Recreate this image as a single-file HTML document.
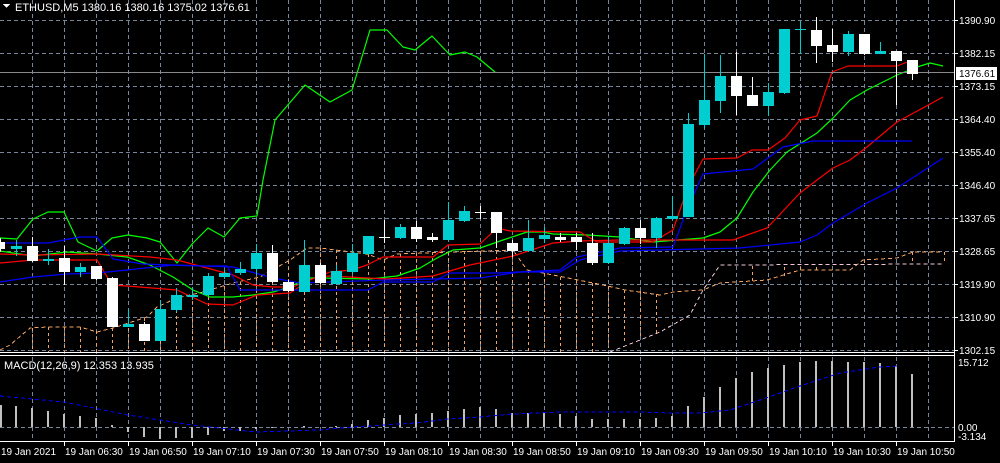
<!DOCTYPE html>
<html><head><meta charset="utf-8"><style>
html,body{margin:0;padding:0;background:#000;width:1000px;height:463px;overflow:hidden}
svg{display:block}
text{font-family:"Liberation Sans",sans-serif;font-size:10px;fill:#fff}
</style></head><body>
<svg width="1000" height="463" viewBox="0 0 1000 463" xmlns="http://www.w3.org/2000/svg" shape-rendering="crispEdges">
<rect width="1000" height="463" fill="#000"/>
<g stroke="#77869a" stroke-width="1" stroke-dasharray="4,3" fill="none">
<path d="M32.5 0V441M64.5 0V441M96.5 0V441M128.5 0V441M160.5 0V441M192.5 0V441M224.5 0V441M256.5 0V441M288.5 0V441M320.5 0V441M352.5 0V441M384.5 0V441M416.5 0V441M448.5 0V441M480.5 0V441M512.5 0V441M544.5 0V441M576.5 0V441M608.5 0V441M640.5 0V441M672.5 0V441M704.5 0V441M736.5 0V441M768.5 0V441M800.5 0V441M832.5 0V441M864.5 0V441M896.5 0V441M928.5 0V441"/>
<path d="M0 20.5H954M0 53.5H954M0 86.5H954M0 119.5H954M0 152.5H954M0 185.5H954M0 218.5H954M0 251.5H954M0 284.5H954M0 317.5H954M0 350.5H954M0 427.5H954"/>
</g>
<rect x="0" y="354" width="954" height="1" fill="#000"/>
<g stroke="#f4a460" stroke-dasharray="3,3" stroke-width="1">
<path d="M32.5 328V352M48.5 327V352M64.5 327V352M80.5 327V352M96.5 331V352M112.5 328V352M128.5 322V352M144.5 318V352M160.5 305V352M176.5 298V352M192.5 295V352M208.5 291V352M224.5 286V352M240.5 282V352M256.5 278V352M272.5 270V352M288.5 261V352M304.5 250V352M320.5 248V352M336.5 250V352M352.5 252V352M368.5 254V352M384.5 260V352M400.5 254V352M416.5 253V352M432.5 252V352M448.5 252V352M464.5 251V352M480.5 251V352M496.5 251V352M512.5 250V352M528.5 270V352M544.5 273V352M560.5 277V352M576.5 280V352M592.5 283V352M608.5 286V348M624.5 290V342M640.5 291V337M656.5 294V333"/>
<path d="M752.5 281V264M784.5 276V264M800.5 270V264M816.5 270V264M864.5 260V264M912.5 252V264M944.5 252V264"/>
</g>
<g fill="none" stroke-width="1" stroke-linejoin="round">
<polyline stroke="#f4a460" stroke-dasharray="4,3" points="0,350 10,345 30,328 48,327 80,327 97,332 113,328 147,317 157,307 177,298 203,292 233,283 260,277 290,260 307,248 320,248 367,254 383,260 397,254 513,250 527,270 553,275 603,285 625,290 660,295 673,292 703,290 720,283 767,280 800,270 850,270 863,260 897,258 913,252 943,252"/>
<polyline stroke="#f0c8d8" stroke-dasharray="4,3" points="610,352 660,332 690,315 703,290 720,265 943,264"/>
</g>
<g fill="none" stroke-width="1.2" stroke-linejoin="round" shape-rendering="auto">
<polyline stroke="#00ff00" points="0,238 17,239 33,219 48,212 64,212 78,242 97,251 112,238 128,235 147,238 160,242 177,263 193,243 208,228 224,237 240,218 257,216 263,180 275,120 305,85 330,102 352,90 370,30 387,30 403,47 415,50 432,36 450,55 465,52 477,57 495,72"/>
<polyline stroke="#00ff00" points="0,251 33,256 67,252 97,254 127,257 150,265 173,277 193,290 210,297 233,297 253,295 273,292 290,287 307,278 320,278 370,279 397,276 420,268 437,258 453,250 480,248 503,240 527,232 543,232 553,234 587,235 620,237 653,242 703,238 720,232 737,218 753,192 770,170 787,152 817,133 833,118 850,100 867,90 897,75 917,67 930,63 943,66"/>
<polyline stroke="#ff0000" points="0,263 33,260 97,260 112,285 127,286 177,290 207,304 233,305 257,295 290,293 310,280 330,272 352,270 367,265 383,257 433,257 448,245 480,244 497,228 510,231 580,232 597,242 653,242 673,230 688,187 703,159 737,158 752,150 768,150 785,138 800,120 817,116 832,72 848,66 897,66 910,61"/>
<polyline stroke="#ff0000" points="0,254 33,255 97,254 150,257 177,260 207,268 233,275 253,285 273,287 293,287 317,277 330,276 387,279 433,276 470,265 513,256 553,243 580,241 620,240 653,240 733,240 767,228 800,193 817,180 833,168 850,160 867,147 897,122 943,97"/>
<polyline stroke="#0000ff" points="0,243 48,243 80,237 97,237 113,259 143,264 200,266 227,266 240,290 368,290 383,282 433,282 450,273 497,273 560,270 577,257 620,248 673,247 688,207 703,174 753,169 783,147 813,141 912,141"/>
<polyline stroke="#0000ff" points="0,282 33,277 67,274 97,273 127,270 173,265 233,267 273,278 300,283 387,280 480,278 520,272 560,272 580,260 620,251 740,248 800,242 817,235 833,223 867,203 897,188 943,158"/>
</g>
<rect x="0" y="72" width="954" height="1" fill="#8a8a8a"/>
<g>
<rect x="0" y="238" width="1" height="14" fill="#fff"/><rect x="0" y="242" width="5" height="7" fill="#fff"/>
<rect x="16" y="240" width="1" height="16" fill="#00ced1"/><rect x="11" y="246" width="11" height="3" fill="#00ced1"/>
<rect x="32" y="237" width="1" height="25" fill="#fff"/><rect x="27" y="246" width="11" height="15" fill="#fff"/>
<rect x="48" y="249" width="1" height="16" fill="#00ced1"/><rect x="43" y="259" width="11" height="2" fill="#00ced1"/>
<rect x="64" y="246" width="1" height="39" fill="#fff"/><rect x="59" y="258" width="11" height="14" fill="#fff"/>
<rect x="80" y="263" width="1" height="14" fill="#00ced1"/><rect x="75" y="267" width="11" height="5" fill="#00ced1"/>
<rect x="96" y="266" width="1" height="14" fill="#fff"/><rect x="91" y="266" width="11" height="13" fill="#fff"/>
<rect x="112" y="277" width="1" height="50" fill="#fff"/><rect x="107" y="278" width="11" height="49" fill="#fff"/>
<rect x="128" y="309" width="1" height="18" fill="#00ced1"/><rect x="123" y="324" width="11" height="3" fill="#00ced1"/>
<rect x="144" y="322" width="1" height="19" fill="#fff"/><rect x="139" y="324" width="11" height="17" fill="#fff"/>
<rect x="160" y="300" width="1" height="41" fill="#00ced1"/><rect x="155" y="309" width="11" height="32" fill="#00ced1"/>
<rect x="176" y="288" width="1" height="24" fill="#00ced1"/><rect x="171" y="295" width="11" height="15" fill="#00ced1"/>
<rect x="192" y="287" width="1" height="13" fill="#00ced1"/><rect x="187" y="295" width="11" height="2" fill="#00ced1"/>
<rect x="208" y="273" width="1" height="23" fill="#00ced1"/><rect x="203" y="276" width="11" height="19" fill="#00ced1"/>
<rect x="224" y="270" width="1" height="9" fill="#00ced1"/><rect x="219" y="273" width="11" height="4" fill="#00ced1"/>
<rect x="240" y="262" width="1" height="13" fill="#00ced1"/><rect x="235" y="269" width="11" height="4" fill="#00ced1"/>
<rect x="256" y="244" width="1" height="31" fill="#00ced1"/><rect x="251" y="253" width="11" height="16" fill="#00ced1"/>
<rect x="272" y="245" width="1" height="38" fill="#fff"/><rect x="267" y="253" width="11" height="29" fill="#fff"/>
<rect x="288" y="280" width="1" height="12" fill="#fff"/><rect x="283" y="282" width="11" height="9" fill="#fff"/>
<rect x="304" y="240" width="1" height="52" fill="#00ced1"/><rect x="299" y="265" width="11" height="27" fill="#00ced1"/>
<rect x="320" y="263" width="1" height="21" fill="#fff"/><rect x="315" y="265" width="11" height="18" fill="#fff"/>
<rect x="336" y="265" width="1" height="20" fill="#00ced1"/><rect x="331" y="271" width="11" height="13" fill="#00ced1"/>
<rect x="352" y="244" width="1" height="30" fill="#00ced1"/><rect x="347" y="253" width="11" height="19" fill="#00ced1"/>
<rect x="368" y="236" width="1" height="19" fill="#00ced1"/><rect x="363" y="236" width="11" height="18" fill="#00ced1"/>
<rect x="384" y="220" width="1" height="23" fill="#fff"/><rect x="379" y="237" width="11" height="1" fill="#fff"/>
<rect x="400" y="224" width="1" height="15" fill="#00ced1"/><rect x="395" y="227" width="11" height="11" fill="#00ced1"/>
<rect x="416" y="221" width="1" height="21" fill="#fff"/><rect x="411" y="227" width="11" height="12" fill="#fff"/>
<rect x="432" y="233" width="1" height="9" fill="#fff"/><rect x="427" y="237" width="11" height="3" fill="#fff"/>
<rect x="448" y="202" width="1" height="39" fill="#00ced1"/><rect x="443" y="220" width="11" height="20" fill="#00ced1"/>
<rect x="464" y="206" width="1" height="16" fill="#00ced1"/><rect x="459" y="211" width="11" height="10" fill="#00ced1"/>
<rect x="480" y="206" width="1" height="13" fill="#fff"/><rect x="475" y="212" width="11" height="1" fill="#fff"/>
<rect x="496" y="212" width="1" height="36" fill="#fff"/><rect x="491" y="212" width="11" height="21" fill="#fff"/>
<rect x="512" y="240" width="1" height="17" fill="#fff"/><rect x="507" y="243" width="11" height="8" fill="#fff"/>
<rect x="528" y="220" width="1" height="32" fill="#00ced1"/><rect x="523" y="238" width="11" height="13" fill="#00ced1"/>
<rect x="544" y="227" width="1" height="16" fill="#00ced1"/><rect x="539" y="235" width="11" height="4" fill="#00ced1"/>
<rect x="560" y="233" width="1" height="9" fill="#fff"/><rect x="555" y="237" width="11" height="3" fill="#fff"/>
<rect x="576" y="233" width="1" height="17" fill="#fff"/><rect x="571" y="237" width="11" height="5" fill="#fff"/>
<rect x="592" y="233" width="1" height="32" fill="#fff"/><rect x="587" y="243" width="11" height="20" fill="#fff"/>
<rect x="608" y="236" width="1" height="28" fill="#00ced1"/><rect x="603" y="243" width="11" height="20" fill="#00ced1"/>
<rect x="624" y="227" width="1" height="18" fill="#00ced1"/><rect x="619" y="228" width="11" height="16" fill="#00ced1"/>
<rect x="640" y="220" width="1" height="24" fill="#fff"/><rect x="635" y="228" width="11" height="10" fill="#fff"/>
<rect x="656" y="217" width="1" height="31" fill="#00ced1"/><rect x="651" y="218" width="11" height="20" fill="#00ced1"/>
<rect x="672" y="196" width="1" height="24" fill="#00ced1"/><rect x="667" y="216" width="11" height="3" fill="#00ced1"/>
<rect x="688" y="113" width="1" height="104" fill="#00ced1"/><rect x="683" y="124" width="11" height="93" fill="#00ced1"/>
<rect x="704" y="54" width="1" height="74" fill="#00ced1"/><rect x="699" y="100" width="11" height="25" fill="#00ced1"/>
<rect x="720" y="55" width="1" height="58" fill="#00ced1"/><rect x="715" y="76" width="11" height="25" fill="#00ced1"/>
<rect x="736" y="52" width="1" height="63" fill="#fff"/><rect x="731" y="76" width="11" height="20" fill="#fff"/>
<rect x="752" y="77" width="1" height="29" fill="#fff"/><rect x="747" y="95" width="11" height="11" fill="#fff"/>
<rect x="768" y="83" width="1" height="33" fill="#00ced1"/><rect x="763" y="92" width="11" height="14" fill="#00ced1"/>
<rect x="784" y="29" width="1" height="65" fill="#00ced1"/><rect x="779" y="29" width="11" height="64" fill="#00ced1"/>
<rect x="800" y="21" width="1" height="33" fill="#00ced1"/><rect x="795" y="29" width="11" height="1" fill="#00ced1"/>
<rect x="816" y="17" width="1" height="46" fill="#fff"/><rect x="811" y="30" width="11" height="16" fill="#fff"/>
<rect x="832" y="29" width="1" height="33" fill="#fff"/><rect x="827" y="45" width="11" height="7" fill="#fff"/>
<rect x="848" y="31" width="1" height="25" fill="#00ced1"/><rect x="843" y="34" width="11" height="18" fill="#00ced1"/>
<rect x="864" y="34" width="1" height="21" fill="#fff"/><rect x="859" y="34" width="11" height="20" fill="#fff"/>
<rect x="880" y="42" width="1" height="12" fill="#00ced1"/><rect x="875" y="51" width="11" height="3" fill="#00ced1"/>
<rect x="896" y="51" width="1" height="54" fill="#fff"/><rect x="891" y="51" width="11" height="10" fill="#fff"/>
<rect x="912" y="60" width="1" height="20" fill="#fff"/><rect x="907" y="60" width="11" height="14" fill="#fff"/>
</g>
<g fill="#c0c0c0">
<rect x="0" y="405" width="2" height="22"/><rect x="15" y="406" width="2" height="21"/><rect x="31" y="408" width="2" height="19"/><rect x="47" y="411" width="2" height="16"/><rect x="63" y="414" width="2" height="13"/><rect x="79" y="416" width="2" height="11"/><rect x="95" y="418" width="2" height="9"/><rect x="111" y="425" width="2" height="2"/>
<rect x="127" y="427" width="2" height="5"/><rect x="143" y="427" width="2" height="10"/><rect x="159" y="427" width="2" height="12"/><rect x="175" y="427" width="2" height="11"/><rect x="191" y="427" width="2" height="11"/><rect x="207" y="427" width="2" height="8"/><rect x="223" y="427" width="2" height="4"/><rect x="239" y="427" width="2" height="4"/><rect x="255" y="427" width="2" height="2"/><rect x="271" y="427" width="2" height="1"/>
<rect x="303" y="426" width="2" height="1"/><rect x="335" y="426" width="2" height="1"/><rect x="351" y="424" width="2" height="3"/><rect x="367" y="420" width="2" height="7"/><rect x="383" y="418" width="2" height="9"/><rect x="399" y="415" width="2" height="12"/><rect x="415" y="414" width="2" height="13"/><rect x="431" y="413" width="2" height="14"/><rect x="447" y="411" width="2" height="16"/><rect x="463" y="409" width="2" height="18"/><rect x="479" y="407" width="2" height="20"/><rect x="495" y="409" width="2" height="18"/><rect x="511" y="413" width="2" height="14"/><rect x="527" y="413" width="2" height="14"/><rect x="543" y="413" width="2" height="14"/><rect x="559" y="414" width="2" height="13"/><rect x="575" y="416" width="2" height="11"/><rect x="591" y="419" width="2" height="8"/><rect x="607" y="419" width="2" height="8"/><rect x="623" y="419" width="2" height="8"/><rect x="639" y="419" width="2" height="8"/><rect x="655" y="418" width="2" height="9"/><rect x="671" y="416" width="2" height="11"/><rect x="687" y="406" width="2" height="21"/><rect x="703" y="397" width="2" height="30"/><rect x="719" y="387" width="2" height="40"/><rect x="735" y="378" width="2" height="49"/><rect x="751" y="372" width="2" height="55"/><rect x="767" y="368" width="2" height="59"/><rect x="783" y="365" width="2" height="62"/><rect x="799" y="362" width="2" height="65"/><rect x="815" y="361" width="2" height="66"/><rect x="831" y="361" width="2" height="66"/><rect x="847" y="362" width="2" height="65"/><rect x="863" y="362" width="2" height="65"/><rect x="879" y="363" width="2" height="64"/><rect x="895" y="366" width="2" height="61"/><rect x="911" y="374" width="2" height="53"/>
</g>
<polyline fill="none" stroke="#0000ff" stroke-width="1" stroke-dasharray="4,3" points="0,396 64,402 128,415 192,425 256,432 320,430 352,427 384,425 416,423 448,419 480,417 512,414 560,412 640,412 672,413 700,413 730,410 760,400 800,386 840,373 880,367 900,366"/>
<rect x="954" y="0" width="1" height="442" fill="#fff"/>
<rect x="0" y="352" width="955" height="1" fill="#fff"/>
<rect x="0" y="355" width="955" height="1" fill="#fff"/>
<rect x="0" y="441" width="955" height="1" fill="#fff"/>
<g fill="#fff">
<rect x="954" y="20" width="4" height="1"/><rect x="954" y="53" width="4" height="1"/><rect x="954" y="86" width="4" height="1"/><rect x="954" y="119" width="4" height="1"/><rect x="954" y="152" width="4" height="1"/><rect x="954" y="185" width="4" height="1"/><rect x="954" y="218" width="4" height="1"/><rect x="954" y="251" width="4" height="1"/><rect x="954" y="284" width="4" height="1"/><rect x="954" y="317" width="4" height="1"/><rect x="954" y="350" width="4" height="1"/>
<rect x="64" y="441" width="1" height="5"/><rect x="128" y="441" width="1" height="5"/><rect x="192" y="441" width="1" height="5"/><rect x="256" y="441" width="1" height="5"/><rect x="320" y="441" width="1" height="5"/><rect x="384" y="441" width="1" height="5"/><rect x="448" y="441" width="1" height="5"/><rect x="512" y="441" width="1" height="5"/><rect x="576" y="441" width="1" height="5"/><rect x="640" y="441" width="1" height="5"/><rect x="704" y="441" width="1" height="5"/><rect x="768" y="441" width="1" height="5"/><rect x="832" y="441" width="1" height="5"/><rect x="896" y="441" width="1" height="5"/>
</g>
<g>
<text x="959" y="24">1390.90</text><text x="959" y="57">1382.15</text><text x="959" y="90">1373.15</text><text x="959" y="123">1364.40</text><text x="959" y="156">1355.40</text><text x="959" y="189">1346.40</text><text x="959" y="222">1337.65</text><text x="959" y="255">1328.65</text><text x="959" y="288">1319.90</text><text x="959" y="321">1310.90</text><text x="959" y="354">1302.15</text>
</g>
<rect x="956" y="67" width="41" height="13" fill="#fff"/>
<text x="959" y="77" style="fill:#000">1376.61</text>
<text x="958" y="366">15.712</text>
<text x="958" y="431">0.00</text>
<text x="958" y="440">-3.134</text>
<path d="M3 4H10L6.5 8Z" fill="#fff"/>
<text x="15" y="11" style="font-size:11px">ETHUSD,M5  1380.16 1380.16 1375.02 1376.61</text>
<text x="4" y="369" style="font-size:11px">MACD(12,26,9) 12.353 13.935</text>
<g>
<text x="1" y="455">19 Jan 2021</text><text x="65" y="455">19 Jan 06:30</text><text x="129" y="455">19 Jan 06:50</text><text x="193" y="455">19 Jan 07:10</text><text x="257" y="455">19 Jan 07:30</text><text x="321" y="455">19 Jan 07:50</text><text x="385" y="455">19 Jan 08:10</text><text x="449" y="455">19 Jan 08:30</text><text x="513" y="455">19 Jan 08:50</text><text x="577" y="455">19 Jan 09:10</text><text x="641" y="455">19 Jan 09:30</text><text x="705" y="455">19 Jan 09:50</text><text x="769" y="455">19 Jan 10:10</text><text x="833" y="455">19 Jan 10:30</text><text x="897" y="455">19 Jan 10:50</text>
</g>
</svg>
</body></html>
